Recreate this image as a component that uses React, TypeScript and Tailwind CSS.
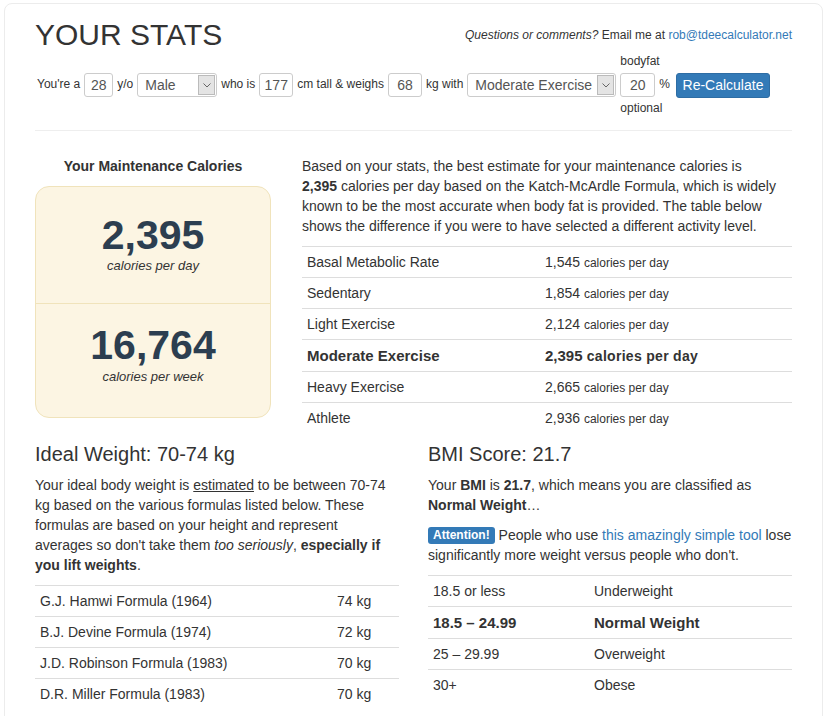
import React from "react";

// Calculator results page: stats form, maintenance calories, ideal weight, BMI.

const activity = [
  { label: "Basal Metabolic Rate", value: "1,545" },
  { label: "Sedentary", value: "1,854" },
  { label: "Light Exercise", value: "2,124" },
  { label: "Moderate Exercise", value: "2,395", active: true },
  { label: "Heavy Exercise", value: "2,665" },
  { label: "Athlete", value: "2,936" },
];

const formulas = [
  { label: "G.J. Hamwi Formula (1964)", value: "74 kg" },
  { label: "B.J. Devine Formula (1974)", value: "72 kg" },
  { label: "J.D. Robinson Formula (1983)", value: "70 kg" },
  { label: "D.R. Miller Formula (1983)", value: "70 kg" },
];

const bmi = [
  { range: "18.5 or less", label: "Underweight" },
  { range: "18.5 – 24.99", label: "Normal Weight", active: true },
  { range: "25 – 29.99", label: "Overweight" },
  { range: "30+", label: "Obese" },
];

const Field = ({ value, w }: { value: string; w: string }) => (
  <div
    className={`${w} h-[24px] rounded-[3px] border border-[#ccc] bg-white flex items-center justify-center text-[14px] text-[#555]`}
  >
    {value}
  </div>
);

const Select = ({ value, w }: { value: string; w: string }) => (
  <div
    className={`${w} h-[24px] rounded-[3px] border border-[#ccc] bg-white flex items-stretch text-[14px] text-[#555]`}
  >
    <span className="flex-1 flex items-center pl-[7px] whitespace-nowrap overflow-hidden">
      {value}
    </span>
    <span className="w-[17px] my-[1px] mr-[1px] border border-[#bbb] bg-[#e4e4e4] flex items-center justify-center">
      <svg width="8" height="5" viewBox="0 0 8 5" fill="none">
        <path d="M0.5 0.5 L4 4 L7.5 0.5" stroke="#666" strokeWidth="1" />
      </svg>
    </span>
  </div>
);

const Label = ({ children }: { children: React.ReactNode }) => (
  <span className="text-[12px] text-[#333] whitespace-nowrap -mt-[3px]">{children}</span>
);

// bootstrap-like condensed table row: 5px padding, 20px line, top border
const Row = ({
  cells,
  first,
  bold,
}: {
  cells: React.ReactNode[];
  first: string;
  bold?: boolean;
}) => (
  <div
    className={`flex border-t border-[#ddd] py-[5px] ${bold ? "text-[15px] leading-[21px] font-bold" : "text-[14px] leading-[20px]"}`}
  >
    <div className={`${first} shrink-0 px-[5px]`}>{cells[0]}</div>
    <div className="flex-1 px-[5px]">{cells[1]}</div>
  </div>
);

export default function App() {
  return (
    <div className="min-h-[716px] bg-white font-['Liberation_Sans',Arial,sans-serif] text-[#333] pt-[3px] pl-[4px]">
      <div className="w-[819px] min-h-[740px] rounded-lg border border-[#ececec] bg-white px-[30px] pt-[14px]">
        {/* header */}
        <div className="flex items-start justify-between">
          <h1 className="text-[30px] leading-[34px] text-[#333]">YOUR STATS</h1>
          <p className="mt-[9px] text-[12px] leading-[17px]">
            <em>Questions or comments?</em> Email me at{" "}
            <span className="text-[#337ab7]">rob@tdeecalculator.net</span>
          </p>
        </div>

        {/* form */}
        <div className="mt-[1px] pl-[2px] flex items-center gap-[4px]">
          <Label>You're a</Label>
          <Field value="28" w="w-[29px]" />
          <Label>y/o</Label>
          <Select value="Male" w="w-[80px]" />
          <Label>who is</Label>
          <Field value="177" w="w-[34px]" />
          <Label>cm tall &amp; weighs</Label>
          <Field value="68" w="w-[34px]" />
          <Label>kg with</Label>
          <Select value="Moderate Exercise" w="w-[149px]" />
          <div className="w-[35px] flex flex-col whitespace-nowrap">
            <span className="text-[12px] leading-[17px]">bodyfat</span>
            <div className="mt-[3px]">
              <Field value="20" w="w-[35px]" />
            </div>
            <span className="mt-[3px] text-[12px] leading-[17px]">optional</span>
          </div>
          <Label>%</Label>
          <button className="ml-[2px] h-[25px] w-[94px] rounded-[3px] border border-[#2e6da4] bg-[#337ab7] text-[14px] text-white">
            Re-Calculate
          </button>
        </div>

        <hr className="mt-[13px] border-t border-[#eee]" />

        {/* maintenance */}
        <div className="mt-[25px] grid grid-cols-[236px_1fr] gap-[31px]">
          <div>
            <h4 className="text-center text-[14px] leading-[20px] font-bold">
              Your Maintenance Calories
            </h4>
            <div className="mt-[10px] rounded-[14px] border border-[#f0e3bb] bg-[#fcf5e3] text-center">
              <div className="h-[117px] border-b border-[#f0e3bb] pt-[26px]">
                <div className="text-[41px] leading-[44px] font-bold text-[#2c3e50]">2,395</div>
                <div className="text-[13px] leading-[18px] italic">calories per day</div>
              </div>
              <div className="h-[113px] pt-[19px]">
                <div className="text-[41px] leading-[44px] font-bold text-[#2c3e50]">16,764</div>
                <div className="mt-[1px] text-[13px] leading-[18px] italic">calories per week</div>
              </div>
            </div>
          </div>

          <div>
            <p className="max-w-[478px] text-[14px] leading-[20px] mb-[10px]">
              Based on your stats, the best estimate for your maintenance calories is{" "}
              <strong>2,395</strong> calories per day based on the Katch-McArdle Formula, which is
              widely known to be the most accurate when body fat is provided. The table below shows
              the difference if you were to have selected a different activity level.
            </p>
            <div>
              {activity.map((r) => (
                <Row
                  key={r.label}
                  first="w-[238px]"
                  bold={r.active}
                  cells={[
                    r.label,
                    <>
                      {r.value}{" "}
                      <span
                        className={
                          r.active
                            ? "text-[14px] leading-none tracking-[0.3px]"
                            : "text-[12px] leading-none"
                        }
                      >
                        calories per day
                      </span>
                    </>,
                  ]}
                />
              ))}
            </div>
          </div>
        </div>

        {/* ideal weight + bmi */}
        <div className="mt-[10px] grid grid-cols-2 gap-[29px]">
          <div>
            <h3 className="text-[20px] leading-[22px] mb-[10px]">Ideal Weight: 70-74 kg</h3>
            <p className="text-[14px] leading-[20px] mb-[10px]">
              Your ideal body weight is <u>estimated</u> to be between 70-74 kg based on the various
              formulas listed below. These formulas are based on your height and represent averages
              so don't take them <em>too seriously</em>, <strong>especially if you lift weights</strong>.
            </p>
            <div>
              {formulas.map((r) => (
                <Row key={r.label} first="w-[297px]" cells={[r.label, r.value]} />
              ))}
            </div>
          </div>

          <div>
            <h3 className="text-[20px] leading-[22px] mb-[10px]">BMI Score: 21.7</h3>
            <p className="text-[14px] leading-[20px] mb-[10px]">
              Your <strong>BMI</strong> is <strong>21.7</strong>, which means you are classified as{" "}
              <strong>Normal Weight</strong>…
            </p>
            <p className="text-[14px] leading-[20px] mb-[10px]">
              <span className="inline-block rounded-[3px] bg-[#337ab7] px-[5px] text-[12px] leading-[17px] font-bold text-white align-[1px]">
                Attention!
              </span>{" "}
              People who use <span className="text-[#337ab7]">this amazingly simple tool</span> lose
              significantly more weight versus people who don't.
            </p>
            <div>
              {bmi.map((r) => (
                <Row key={r.range} first="w-[161px]" bold={r.active} cells={[r.range, r.label]} />
              ))}
            </div>
          </div>
        </div>
      </div>
    </div>
  );
}
